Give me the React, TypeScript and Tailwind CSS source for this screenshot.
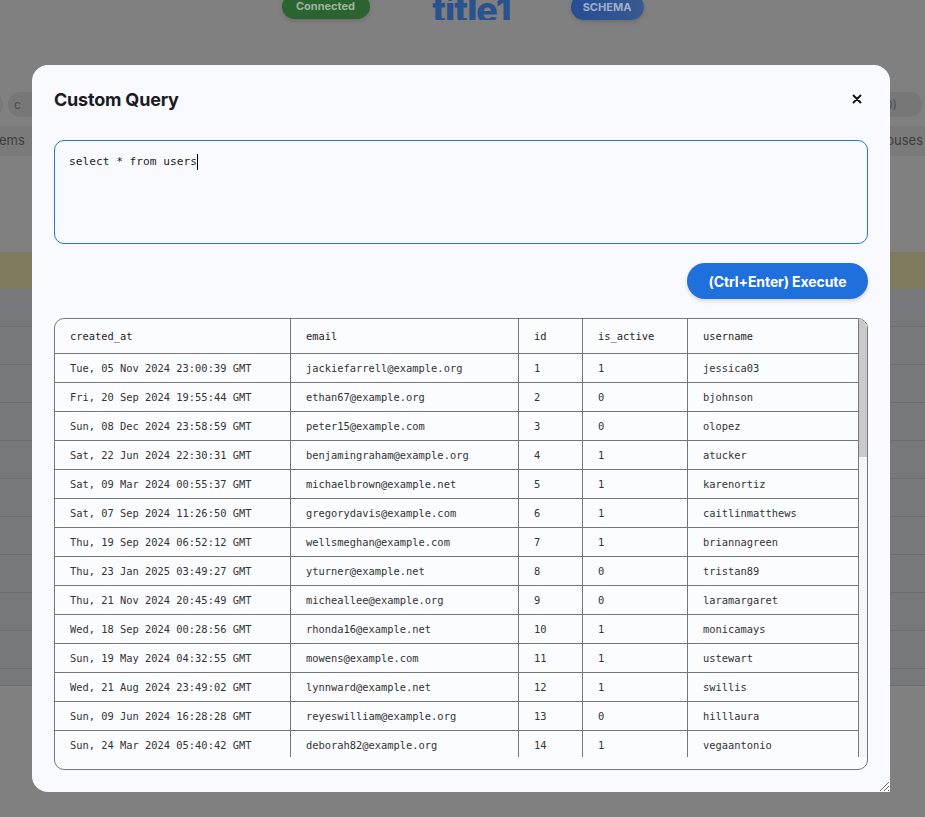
import React from "react";

const rows: [string, string, string, string, string][] = [
  ["Tue, 05 Nov 2024 23:00:39 GMT", "jackiefarrell@example.org", "1", "1", "jessica03"],
  ["Fri, 20 Sep 2024 19:55:44 GMT", "ethan67@example.org", "2", "0", "bjohnson"],
  ["Sun, 08 Dec 2024 23:58:59 GMT", "peter15@example.com", "3", "0", "olopez"],
  ["Sat, 22 Jun 2024 22:30:31 GMT", "benjamingraham@example.org", "4", "1", "atucker"],
  ["Sat, 09 Mar 2024 00:55:37 GMT", "michaelbrown@example.net", "5", "1", "karenortiz"],
  ["Sat, 07 Sep 2024 11:26:50 GMT", "gregorydavis@example.com", "6", "1", "caitlinmatthews"],
  ["Thu, 19 Sep 2024 06:52:12 GMT", "wellsmeghan@example.com", "7", "1", "briannagreen"],
  ["Thu, 23 Jan 2025 03:49:27 GMT", "yturner@example.net", "8", "0", "tristan89"],
  ["Thu, 21 Nov 2024 20:45:49 GMT", "micheallee@example.org", "9", "0", "laramargaret"],
  ["Wed, 18 Sep 2024 00:28:56 GMT", "rhonda16@example.net", "10", "1", "monicamays"],
  ["Sun, 19 May 2024 04:32:55 GMT", "mowens@example.com", "11", "1", "ustewart"],
  ["Wed, 21 Aug 2024 23:49:02 GMT", "lynnward@example.net", "12", "1", "swillis"],
  ["Sun, 09 Jun 2024 16:28:28 GMT", "reyeswilliam@example.org", "13", "0", "hilllaura"],
  ["Sun, 24 Mar 2024 05:40:42 GMT", "deborah82@example.org", "14", "1", "vegaantonio"],
];

const headers = ["created_at", "email", "id", "is_active", "username"];

const mono = { fontFamily: '"DejaVu Sans Mono", "Liberation Mono", monospace' };

function BackgroundPage() {
  const bgRows = Array.from({ length: 10 });
  return (
    <div className="flex flex-col w-full" style={{ fontFamily: 'Inter, "Liberation Sans", sans-serif' }}>
      {/* top header */}
      <div className="flex justify-center items-start h-[26px] -mt-[6px] overflow-visible">
        <div className="w-[88px] h-[25px] rounded-full bg-[#2b6430] flex items-center justify-center text-[11px] font-bold text-[#9fb3a0] shadow-[0_2px_4px_rgba(0,0,0,0.15)]">
          Connected
        </div>
        <div className="ml-[62px] w-[80px] h-[26px] overflow-hidden flex justify-center items-end">
          <span className="text-[36px] leading-none font-extrabold tracking-[-1px] text-[#29528f] translate-y-[8px]">title1</span>
        </div>
        <div className="ml-[59px] w-[73px] h-[26px] rounded-full bg-gradient-to-r from-[#264d97] to-[#385a8f] flex items-center justify-center text-[11px] font-bold text-[#a0afcb] shadow-[0_2px_4px_rgba(0,0,0,0.15)]">
          SCHEMA
        </div>
      </div>
      {/* filter pills */}
      <div className="flex justify-between items-center mt-[72px] h-[25px]">
        <div className="flex gap-[5px] -ml-[30px]">
          <div className="w-[33px] h-[25px] rounded-full bg-[#777777]" />
          <div className="w-[120px] h-[25px] rounded-full bg-[#777777] pl-[6px] text-[12px] leading-[25px] text-[#4a4a4a]">c</div>
        </div>
        <div className="w-[120px] h-[25px] rounded-full bg-[#777777] mr-[3px] text-right pr-[25px] text-[12px] leading-[25px] text-[#4a4a4a]">(0)</div>
      </div>
      {/* tabs */}
      <div className="flex justify-between items-center mt-[9px] h-[30px] bg-[#7a7a7a] text-[13px] text-[#3d3d3d]">
        <span className="-ml-[1px]">ems</span>
        <span className="mr-[2px]">ouses</span>
      </div>
      {/* table */}
      <div className="mt-[96px] h-[37px] bg-[#7d7a5e]" />
      <div className="flex flex-col bg-[#77787b]">
        {bgRows.map((_, i) => (
          <div key={i} className="h-[38px] border-b border-[#6c6d70]" />
        ))}
        <div className="h-[17px] border-b border-[#6c6d70]" />
      </div>
    </div>
  );
}

function ResultTable() {
  const grid = "grid grid-cols-[236px_228px_64px_105px_171px]";
  return (
    <div className="mt-[19px] h-[452px] rounded-[10px] border border-[#76767a] overflow-hidden bg-[#fbfcff]">
      <div className="flex h-[438px]">
        <div className="flex-1 overflow-hidden" style={mono}>
          <div className={grid}>
            {headers.map((h) => (
              <div key={h} className="h-[35px] border-r border-b border-[#76767a] pl-[15px] pt-[1px] flex items-center text-[10.4px] text-[#1e1e1e]">
                {h}
              </div>
            ))}
          </div>
          {rows.map((r, i) => (
            <div key={i} className={grid}>
              {r.map((c, j) => (
                <div key={j} className="h-[29px] border-r border-b border-[#76767a] pl-[15px] pt-[2px] flex items-center text-[10.4px] text-[#333333] whitespace-nowrap">
                  {c}
                </div>
              ))}
            </div>
          ))}
        </div>
        <div className="w-[8px] bg-[#f4f5f8] flex flex-col">
          <div className="h-[138px] bg-[#c9c9c9] rounded-tr-[8px]" />
        </div>
      </div>
    </div>
  );
}

export default function App() {
  return (
    <div className="relative w-full h-[817px] overflow-hidden bg-[#808080]">
      <BackgroundPage />
      <div
        role="dialog"
        className="absolute left-[32px] top-[65px] w-[858px] h-[727px] rounded-[16px] rounded-br-none bg-[#f8faff] px-[22px] pt-[22px] pb-[22px] flex flex-col"
        style={{ fontFamily: 'Inter, "Liberation Sans", sans-serif' }}
      >
        <div className="flex justify-between items-center h-[24px] pr-[3px]">
          <h2 className="text-[18px] font-bold text-[#1b1b1f] tracking-[-0.2px]">Custom Query</h2>
          <svg width="10" height="10" viewBox="0 0 10 10" className="mr-[3px]">
            <path d="M1.5 1.5 L8.5 8.5 M8.5 1.5 L1.5 8.5" stroke="#111" strokeWidth="1.9" strokeLinecap="round" />
          </svg>
        </div>
        <div
          role="textbox"
          className="mt-[29px] h-[104px] rounded-[10px] border border-[#2374e1] bg-[#f8faff] pl-[14px] pt-[13px]"
          style={mono}
        >
          <div className="flex items-center h-[16px]">
            <span className="text-[11.2px] text-[#222] leading-[16px]">select * from users</span>
            <span className="inline-block w-px h-[16px] bg-black" />
          </div>
        </div>
        <div className="flex justify-end mt-[19px]">
          <button className="w-[181px] h-[36px] rounded-full bg-[#1f6fdd] text-white text-[14px] font-bold tracking-[-0.1px] shadow-[0_2px_4px_rgba(0,0,0,0.15)]">
            (Ctrl+Enter) Execute
          </button>
        </div>
        <ResultTable />
        <svg width="12" height="12" viewBox="0 0 12 12" className="absolute right-0 bottom-0">
          <path d="M11 2 L2 11 M11 6 L6 11 M11 10 L10 11" stroke="#6b6b6b" strokeWidth="1" />
        </svg>
      </div>
    </div>
  );
}
